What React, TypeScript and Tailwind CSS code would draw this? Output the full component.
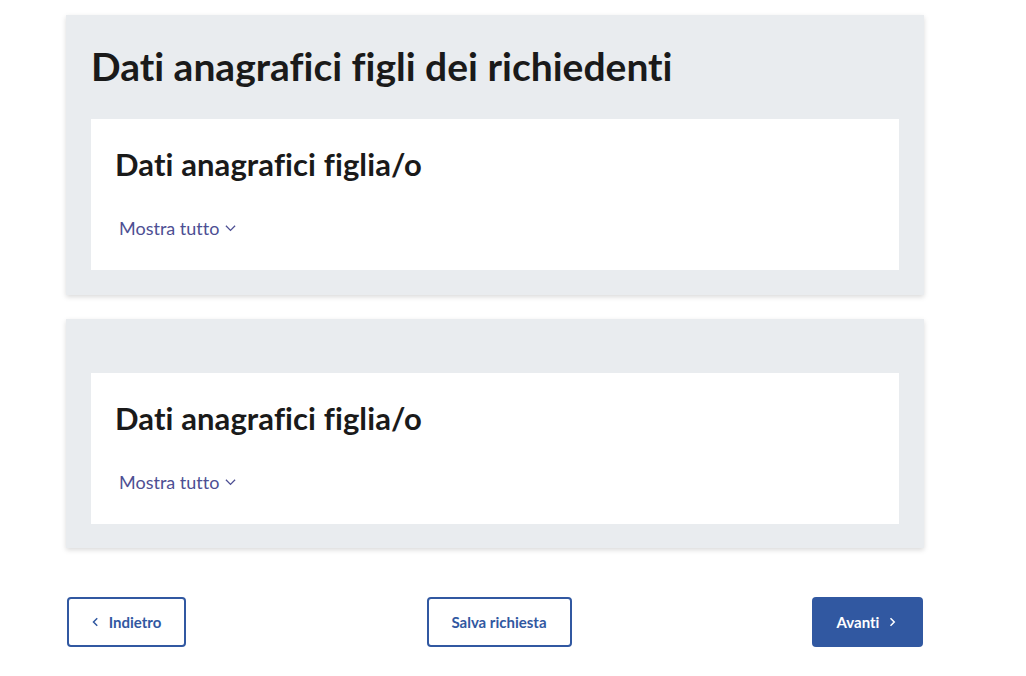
import React from "react";

const font = { fontFamily: "Lato, 'Noto Sans', sans-serif" };

function Chevron({ dir, className, w = 1.4 }: { dir: "left" | "right" | "down"; className?: string; w?: number }) {
  const d =
    dir === "left" ? "M7 1 L2 6 L7 11" : dir === "right" ? "M2 1 L7 6 L2 11" : "M1 3 L6 8 L11 3";
  return (
    <svg viewBox="0 0 12 12" className={className} fill="none" stroke="currentColor" strokeWidth={w}>
      <path d={d} />
    </svg>
  );
}

function Child() {
  return (
    <div className="bg-white pl-[24px] pr-[25px] pt-[25px] pb-[30px] h-[151px]">
      <h3 className="text-[31px] leading-[40px] font-bold text-[#1a1a1a] tracking-[0.1px]">Dati anagrafici figlia/o</h3>
      <button className="mt-[32px] ml-[4px] flex items-center gap-[6px] text-[18px] leading-[24px] text-[#4d4f93]">
        Mostra tutto
        <Chevron dir="down" className="w-[11px] h-[11px]" />
      </button>
    </div>
  );
}

export default function App() {
  return (
    <div className="min-h-[676px] bg-white [font-variant-ligatures:none]" style={font}>
      <div className="w-[858px] ml-[66px] pt-[15px]">
        <section className="bg-[#e9ecef] shadow-[0_2px_5px_rgba(0,0,0,0.15)] px-[25px] pt-[26px] pb-[25px]">
          <h2 className="text-[39px] leading-[50px] font-bold text-[#1a1a1a] mb-[28px]">
            Dati anagrafici figli dei richiedenti
          </h2>
          <Child />
        </section>
        <section className="mt-[24px] bg-[#e9ecef] shadow-[0_2px_5px_rgba(0,0,0,0.15)] px-[25px] pt-[54px] pb-[24px]">
          <Child />
        </section>
        <div className="mt-[49px] flex items-center justify-between">
          <button className="ml-[1px] w-[119px] h-[50px] rounded-[4px] border-2 border-[#3158a1] text-[#3158a1] text-[15px] font-bold flex items-center justify-center gap-[8px]">
            <Chevron dir="left" className="w-[9px] h-[10px]" w={2} />
            Indietro
          </button>
          <button className="w-[145px] h-[50px] rounded-[4px] border-2 border-[#3158a1] text-[#3158a1] text-[15px] font-bold flex items-center justify-center">
            Salva richiesta
          </button>
          <button className="mr-[1px] w-[111px] h-[50px] rounded-[4px] bg-[#3158a1] text-white text-[15px] font-bold flex items-center justify-center gap-[10px]">
            Avanti
            <Chevron dir="right" className="w-[9px] h-[10px]" w={2} />
          </button>
        </div>
      </div>
    </div>
  );
}
